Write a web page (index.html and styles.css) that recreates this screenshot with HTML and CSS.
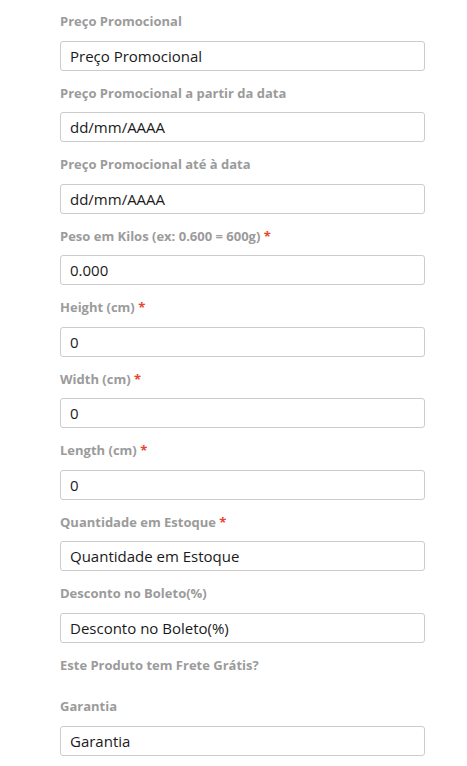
FILE: index.html
```html
<!DOCTYPE html>
<html lang="pt">
<head>
<meta charset="utf-8">
<title>Produto</title>
<link rel="stylesheet" href="styles.css">
</head>
<body>
<form class="form">
  <div class="field">
    <label class="label">Preço Promocional</label>
    <input class="input" type="text" value="Preço Promocional">
  </div>
  <div class="field">
    <label class="label">Preço Promocional a partir da data</label>
    <input class="input" type="text" value="dd/mm/AAAA">
  </div>
  <div class="field">
    <label class="label">Preço Promocional até à data</label>
    <input class="input" type="text" value="dd/mm/AAAA">
  </div>
  <div class="field">
    <label class="label">Peso em Kilos (ex: 0.600 = 600g) <span class="req">*</span></label>
    <input class="input" type="text" value="0.000">
  </div>
  <div class="field">
    <label class="label">Height (cm) <span class="req">*</span></label>
    <input class="input" type="text" value="0">
  </div>
  <div class="field">
    <label class="label">Width (cm) <span class="req">*</span></label>
    <input class="input" type="text" value="0">
  </div>
  <div class="field">
    <label class="label">Length (cm) <span class="req">*</span></label>
    <input class="input" type="text" value="0">
  </div>
  <div class="field">
    <label class="label">Quantidade em Estoque <span class="req">*</span></label>
    <input class="input" type="text" value="Quantidade em Estoque">
  </div>
  <div class="field">
    <label class="label">Desconto no Boleto(%)</label>
    <input class="input" type="text" value="Desconto no Boleto(%)">
  </div>
  <div class="field">
    <label class="label">Este Produto tem Frete Grátis?</label>
    <div class="empty"></div>
  </div>
  <div class="field">
    <label class="label">Garantia</label>
    <input class="input" type="text" value="Garantia">
  </div>
</form>
</body>
</html>
```

FILE: styles.css
```css
html, body {
  margin: 0;
  padding: 0;
  background: #ffffff;
}

.form {
  display: flex;
  flex-direction: column;
  gap: 13px;
  width: 365px;
  padding: 12px 0 0 60px;
  font-family: "Open Sans", "Liberation Sans", sans-serif;
}

.field {
  display: flex;
  flex-direction: column;
  gap: 9.5px;
}

.label {
  display: block;
  font-size: 13px;
  line-height: 19px;
  font-weight: 700;
  color: #9b9b9b;
}

.req {
  color: #e8442e;
}

.empty {
  height: 0;
}

.input {
  box-sizing: border-box;
  width: 100%;
  height: 30px;
  margin: 0;
  padding: 0 9px;
  border: 1px solid #cccccc;
  border-radius: 3px;
  background: #ffffff;
  font-family: "Open Sans", "Liberation Sans", sans-serif;
  font-size: 15px;
  color: #1a1a1a;
  outline: none;
}
```
